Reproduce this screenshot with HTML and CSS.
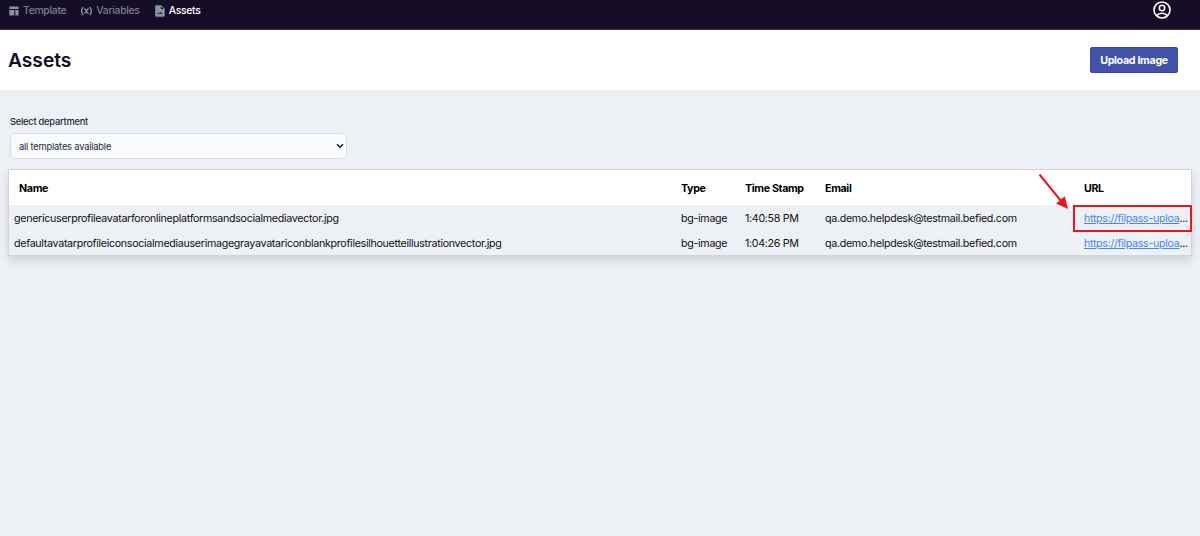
FILE: index.html
```
<!DOCTYPE html>
<html lang="en">
<head>
    <meta charset="UTF-8">
    <title>Assets</title>
    <link rel="stylesheet" href="styles.css">
</head>
<body>
    <nav class="navbar">
        <div class="nav-links">
            <a class="nav-item">
                <svg class="nav-icon" width="10" height="10" viewBox="0 0 10 10">
                    <path d="M0.3 0.5h9.2v2.6H0.3zM0.3 4h5v5.5H0.3zM6.3 4h3.2v5.5H6.3z"/>
                </svg>
                <span>Template</span>
            </a>
            <a class="nav-item">
                <svg class="nav-icon-line" width="11" height="10" viewBox="0 0 11 10">
                    <path d="M2.2 1Q-0.9 5 2.2 9M8.8 1Q11.9 5 8.8 9M3.3 3Q4.8 2.8 5.4 5T7.5 7M7.7 3Q6.3 3 5.4 5T3.2 7"/>
                </svg>
                <span>Variables</span>
            </a>
            <a class="nav-item active">
                <svg class="nav-icon" width="10" height="12" viewBox="0 0 10 12">
                    <path fill-rule="evenodd" d="M1.2 0.3H6.2L9.7 3.8V10.7Q9.7 11.7 8.7 11.7H1.2Q0.2 11.7 0.2 10.7V1.3Q0.2 0.3 1.2 0.3zM5.9 1.3V4.1H8.7zM2.3 8.8H7.6L5.9 6.9L4.6 8L3.7 7.4z"/>
                </svg>
                <span>Assets</span>
            </a>
        </div>
        <svg class="user-icon" width="18" height="18" viewBox="0 0 18 18">
            <circle cx="9" cy="9" r="8"/>
            <circle cx="9" cy="7" r="2.7"/>
            <path d="M3.5 14.6Q5.6 12.2 9 12.2T14.5 14.6"/>
        </svg>
    </nav>

    <header class="page-header">
        <h1>Assets</h1>
        <button class="upload-btn">Upload Image</button>
    </header>

    <main class="content">
        <div class="department">
            <label for="department">Select department</label>
            <div class="select-wrap">
                <select id="department">
                    <option>all templates available</option>
                </select>
                <svg class="chevron" width="8" height="6" viewBox="0 0 8 6">
                    <path d="M1 1.2L4 4.2L7 1.2"/>
                </svg>
            </div>
        </div>

        <div class="table-wrap">
            <table class="assets-table">
                <colgroup>
                    <col class="col-name">
                    <col class="col-type">
                    <col class="col-time">
                    <col class="col-email">
                    <col class="col-url">
                </colgroup>
                <thead>
                    <tr>
                        <th class="name-head">Name</th>
                        <th>Type</th>
                        <th>Time Stamp</th>
                        <th>Email</th>
                        <th>URL</th>
                    </tr>
                </thead>
                <tbody>
                    <tr>
                        <td>genericuserprofileavatarforonlineplatformsandsocialmediavector.jpg</td>
                        <td>bg-image</td>
                        <td>1:40:58 PM</td>
                        <td>qa.demo.helpdesk@testmail.befied.com</td>
                        <td class="url"><a href="#">https://filpass-uploa</a>...</td>
                    </tr>
                    <tr>
                        <td>defaultavatarprofileiconsocialmediauserimagegrayavatariconblankprofilesilhouetteillustrationvector.jpg</td>
                        <td>bg-image</td>
                        <td>1:04:26 PM</td>
                        <td>qa.demo.helpdesk@testmail.befied.com</td>
                        <td class="url"><a href="#">https://filpass-uploa</a>...</td>
                    </tr>
                </tbody>
            </table>
            <!-- callout pointing at the first URL -->
            <div class="highlight-box"></div>
            <svg class="highlight-arrow" width="32" height="38" viewBox="0 0 32 38">
                <path class="arrow-line" d="M1.5 1.5L23 28"/>
                <path class="arrow-head" d="M30 36L18 30.5L26.8 23.3z"/>
            </svg>
        </div>
    </main>
</body>
</html>
```
FILE: styles.css
```
* {
    box-sizing: border-box;
}
body {
    margin: 0;
    min-height: 536px;
    font-family: Inter, 'Liberation Sans', sans-serif;
    font-size: 10.7px;
    letter-spacing: -0.31px;
    color: #111;
    background-color: #edf0f5;
}
.navbar {
    display: flex;
    justify-content: space-between;
    align-items: flex-start;
    height: 30px;
    padding: 1px 29px 0 9px;
    background-color: #160d26;
    border-bottom: 1px solid #37304a;
}
.nav-links {
    display: flex;
    gap: 15px;
    height: 19px;
}
.nav-item {
    display: flex;
    align-items: center;
    gap: 4px;
    font-size: 10.4px;
    font-weight: 500;
    color: #7a7f8c;
}
.nav-item.active {
    color: #fff;
}
.nav-icon {
    fill: #8a929e;
}
.nav-icon-line {
    fill: none;
    stroke: #8a929e;
    stroke-width: 1.3;
}
.user-icon {
    fill: none;
    stroke: #fff;
    stroke-width: 1.6;
}
.page-header {
    display: flex;
    justify-content: space-between;
    align-items: center;
    height: 60px;
    padding: 0 22px 0 8px;
    background-color: #fff;
}
.page-header h1 {
    margin: 0;
    font-size: 19.2px;
    font-weight: 600;
    letter-spacing: 0;
    color: #140c25;
}
.upload-btn {
    width: 88px;
    height: 26px;
    padding: 0;
    border: 1px solid #3a4a9f;
    border-radius: 2px;
    font-family: inherit;
    font-size: 10.7px;
    font-weight: 700;
    letter-spacing: -0.33px;
    color: #fff;
    background-color: #4053a8;
}
.content {
    padding: 25px 8px 0;
}
.department {
    width: 337px;
    margin-left: 2px;
}
.department label {
    display: block;
    height: 18px;
    font-size: 9.3px;
    font-weight: 500;
    line-height: 13px;
    letter-spacing: -0.24px;
    color: #1f2937;
}
.select-wrap {
    position: relative;
}
.department select {
    display: block;
    width: 100%;
    height: 26px;
    padding: 0 8px;
    border: 1px solid #d9dce3;
    border-radius: 5px;
    appearance: none;
    font-family: inherit;
    font-size: 9.3px;
    letter-spacing: -0.19px;
    color: #1f2937;
    background-color: #f9fafb;
}
.chevron {
    position: absolute;
    top: 10px;
    right: 3px;
    fill: none;
    stroke: #111827;
    stroke-width: 1.5;
}
.table-wrap {
    position: relative;
    margin-top: 10px;
    border: 1px solid #d1d5db;
    box-shadow: 0 5px 8px rgba(0, 0, 0, 0.12);
}
.assets-table {
    width: 100%;
    table-layout: fixed;
    border-collapse: collapse;
}
.col-name {
    width: 667px;
}
.col-type {
    width: 64px;
}
.col-time {
    width: 80px;
}
.col-email {
    width: 259px;
}
.assets-table th {
    height: 35px;
    padding: 1px 0 0 5px;
    font-weight: 700;
    letter-spacing: -0.36px;
    text-align: left;
    color: #000;
    background-color: #fff;
}
.assets-table .name-head {
    padding-left: 10px;
}
.assets-table td {
    height: 25px;
    padding: 2px 0 0 5px;
    white-space: nowrap;
}
.url a {
    color: #4b86f0;
}
.highlight-box {
    position: absolute;
    top: 35px;
    right: -1px;
    width: 119px;
    height: 27px;
    border: 2px solid #e3191d;
}
.highlight-arrow {
    position: absolute;
    top: 3px;
    right: 121px;
}
.arrow-line {
    fill: none;
    stroke: #e3191d;
    stroke-width: 2;
}
.arrow-head {
    fill: #e3191d;
}
```
